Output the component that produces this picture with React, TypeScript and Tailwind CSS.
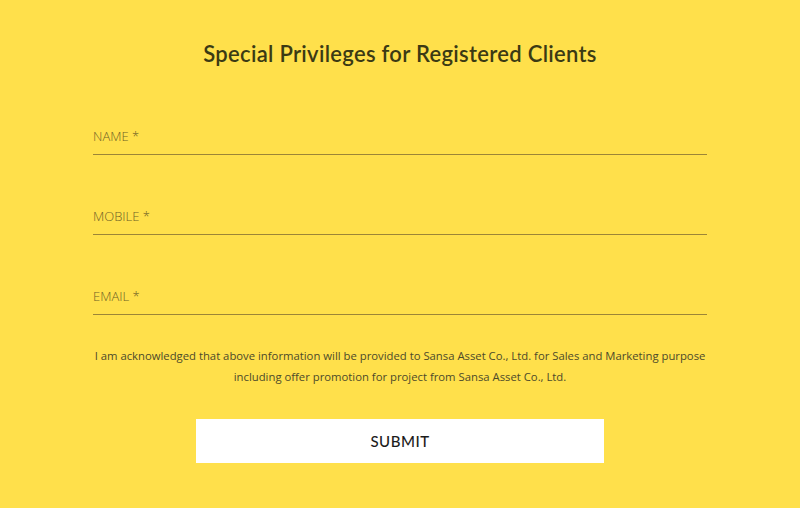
import React from 'react';

const fields = ['NAME *', 'MOBILE *', 'EMAIL *'];

const App: React.FC = () => {
    return (
        <div className="w-[800px] h-[508px] bg-[#ffe04b] flex flex-col items-center" style={{ fontFamily: '"Open Sans", "Liberation Sans", sans-serif' }}>
            <h1 className="mt-[40px] text-[22px] leading-[28px] font-semibold text-[#3b3a14] tracking-[0.3px]" style={{ fontFamily: 'Lato, "Liberation Sans", sans-serif' }}>
                Special Privileges for Registered Clients
            </h1>
            <div className="w-[614px] mt-[35px] flex flex-col gap-[28px]">
                {fields.map(f => (
                    <div key={f} className="h-[52px] flex flex-col justify-end border-b border-[#9c8537]">
                        <input className="w-full bg-transparent border-none outline-none p-0 pb-[9px] text-[13px] leading-[18px] font-light text-[#6e6326] placeholder:text-[#6f6227]" placeholder={f} />
                    </div>
                ))}
            </div>
            <p className="mt-[30px] w-[660px] text-center text-[11.3px] leading-[21px] text-[#4d4a2a]">
                I am acknowledged that above information will be provided to Sansa Asset Co., Ltd. for Sales and Marketing purpose<br />
                including offer promotion for project from Sansa Asset Co., Ltd.
            </p>
            <button className="mt-[32px] w-[408px] h-[44px] bg-white text-[15px] font-medium text-[#1c1c1c] tracking-[0.5px]" style={{ fontFamily: 'Lato, "Liberation Sans", sans-serif' }}>
                SUBMIT
            </button>
        </div>
    );
};

export default App;
